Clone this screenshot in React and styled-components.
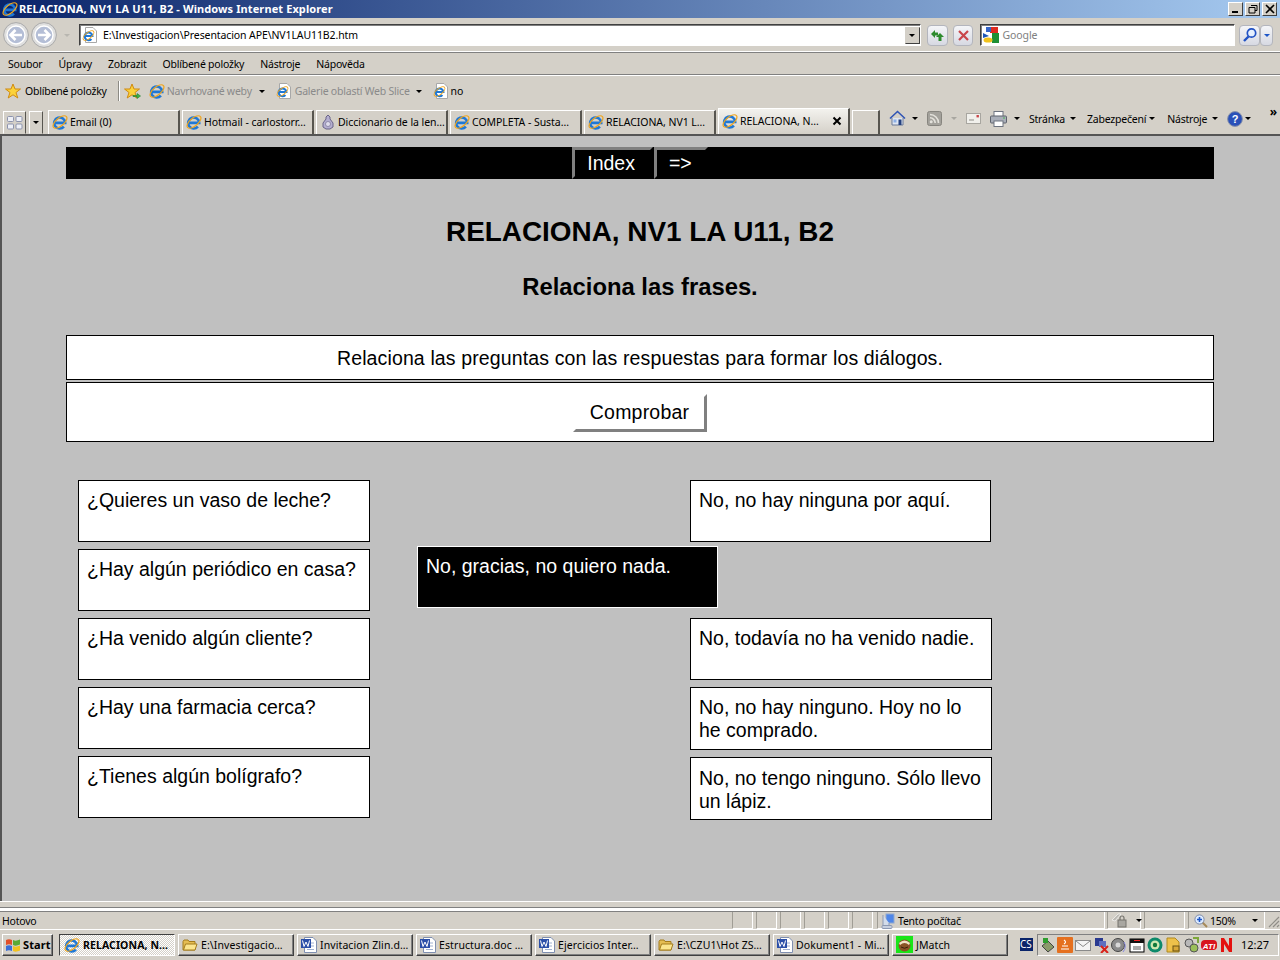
import React from "react";
import styled, { createGlobalStyle } from "styled-components";

const Global = createGlobalStyle`
  html, body { margin: 0; padding: 0; width: 1280px; height: 960px; overflow: hidden; background: #d4d0c8; }
  * { box-sizing: border-box; }
`;

const UI_FONT = `"Noto Sans", "DejaVu Sans", sans-serif`;
const PAGE_FONT = `"Liberation Sans", Arial, sans-serif`;

const Window = styled.div`
  width: 1280px;
  height: 960px;
  display: flex;
  flex-direction: column;
  font-family: ${UI_FONT};
  font-size: 10.5px;
  letter-spacing: -0.22px;
  color: #000;
  background: #d4d0c8;
`;

const TitleBar = styled.div`
  height: 18px;
  flex: none;
  display: flex;
  align-items: center;
  padding: 0 3px 0 2px;
  background: linear-gradient(to right, #0a246a, #a6caf0);
  color: #fff;
  font-weight: 700;
  font-size: 11px;
  letter-spacing: 0.1px;
`;
const TitleText = styled.span`
  margin: 0 0 2px 1px;
  flex: 1;
`;
const WinButtons = styled.div`
  display: flex;
  gap: 2px;
`;
const WinButton = styled.div`
  width: 15px;
  height: 14px;
  background: #d4d0c8;
  border: 1px solid;
  border-color: #fff #404040 #404040 #fff;
  display: flex;
  align-items: center;
  justify-content: center;
`;

const AddressBar = styled.div`
  height: 35px;
  flex: none;
  display: flex;
  align-items: center;
  padding: 0 7px 0 3px;
  border-bottom: 1px solid #808080;
  box-shadow: inset 0 -2px 0 -1px #fff;
`;
const Field = styled.div`
  height: 22px;
  width: ${(p) => p.$w}px;
  margin-left: ${(p) => p.$ml || 0}px;
  background: #fff;
  border: 1px solid;
  border-color: #404040 #fff #fff #404040;
  box-shadow: inset 1px 1px 0 #808080;
  display: flex;
  align-items: center;
  padding-left: 2px;
`;
const FieldText = styled.span`
  margin-left: ${(p) => p.$ml || 5}px;
  flex: 1;
  color: ${(p) => p.$color || "#000"};
  letter-spacing: -0.1px;
`;
const ComboArrow = styled.div`
  width: 15px;
  height: 17px;
  background: #d4d0c8;
  border: 1px solid;
  border-color: #d4d0c8 #404040 #404040 #d4d0c8;
  display: flex;
  align-items: center;
  justify-content: center;
`;
const GlassButton = styled.div`
  width: ${(p) => p.$w || 21}px;
  height: 21px;
  margin-left: ${(p) => p.$ml || 0}px;
  border: 1px solid #b3b5bd;
  border-radius: 4px;
  background: linear-gradient(#f4f5f8, #d7d9e2);
  display: flex;
  align-items: center;
  justify-content: center;
`;
const BackForward = styled.div`
  display: flex;
  align-items: center;
  gap: 2px;
  margin-right: 9px;
`;

const MenuBar = styled.div`
  height: 22px;
  flex: none;
  display: flex;
  align-items: center;
  padding-left: 8px;
  gap: 16px;
  border-bottom: 1px solid #808080;
  box-shadow: 0 1px 0 #fff;
`;

const FavBar = styled.div`
  height: 32px;
  flex: none;
  display: flex;
  align-items: center;
  padding-left: 5px;
`;
const FavItem = styled.span`
  display: inline-flex;
  align-items: center;
  gap: ${(p) => p.$gap || 0}px;
  margin-left: ${(p) => p.$ml || 0}px;
  color: ${(p) => (p.$muted ? "#8a8a8a" : "#000")};
  white-space: nowrap;
`;
const FavSep = styled.div`
  width: 1px;
  height: 20px;
  margin-left: 11px;
  background: #8c8a84;
  box-shadow: 1px 0 0 #fff;
`;
const Caret = styled.span`
  display: inline-block;
  flex: none;
  width: 0;
  height: 0;
  margin-left: ${(p) => p.$ml ?? 5}px;
  border-left: 3px solid transparent;
  border-right: 3px solid transparent;
  border-top: 3px solid ${(p) => p.$color || "#000"};
`;

const TabRow = styled.div`
  height: 27px;
  flex: none;
  display: flex;
  align-items: flex-end;
  padding-left: 3px;
  position: relative;
`;
const QuickTab = styled.div`
  width: ${(p) => p.$w}px;
  height: 23px;
  margin-left: ${(p) => p.$ml || 0}px;
  border: 1px solid;
  border-color: #fff #57554f transparent #fff;
  display: flex;
  align-items: center;
  justify-content: center;
`;
const Tab = styled.div`
  width: 132px;
  height: ${(p) => (p.$active ? 26 : 24)}px;
  margin-left: ${(p) => p.$ml ?? 2}px;
  display: flex;
  align-items: center;
  padding: 0 4px 2px 3px;
  gap: 2px;
  border-top: 1px solid #fff;
  border-left: 1px solid #fff;
  border-right: 2px solid #57554f;
  background: ${(p) => (p.$active ? "linear-gradient(#f3f2ee, #d4d0c8)" : "transparent")};
  white-space: nowrap;
`;
const TabText = styled.span`
  flex: 1;
  letter-spacing: -0.05px;
`;
const NewTab = styled.div`
  width: 28px;
  height: 24px;
  margin-left: 2px;
  border-top: 1px solid #fff;
  border-left: 1px solid #fff;
  border-right: 2px solid #57554f;
`;
const CommandBar = styled.div`
  display: flex;
  align-items: center;
  height: 24px;
  margin-left: 9px;
  padding-bottom: 7px;
`;
const CmdIcon = styled.span`
  display: inline-flex;
  margin-left: ${(p) => p.$ml || 0}px;
`;
const CmdLabel = styled.span`
  margin-left: ${(p) => p.$ml || 0}px;
  white-space: nowrap;
`;
const Chevrons = styled.span`
  position: absolute;
  right: 3px;
  top: -4px;
  font-size: 12px;
  font-weight: 700;
`;

const Content = styled.main`
  height: 767px;
  flex: none;
  background: #c0c0c0;
  border-top: 2px solid #555;
  border-left: 2px solid #555;
  padding: 11px 66px 0 64px;
  font-family: ${PAGE_FONT};
  font-size: 19.5px;
  letter-spacing: 0;
`;
const NavBar = styled.nav`
  height: 32px;
  background: #000;
  display: flex;
  justify-content: center;
  gap: 1px;
`;
const NavButton = styled.div`
  height: 32px;
  color: #fff;
  padding: 0 ${(p) => p.$pr}px 0 ${(p) => p.$pl}px;
  border: 3px solid;
  border-color: #808080 #000 #000 #808080;
  line-height: 26px;
  white-space: nowrap;
`;
const Heading = styled.h1`
  margin: 37px 0 0;
  text-align: center;
  font-size: 27.9px;
  line-height: 32px;
  font-weight: 700;
`;
const SubHeading = styled.h2`
  margin: 25px 0 0;
  text-align: center;
  font-size: 23.8px;
  line-height: 28px;
  font-weight: 700;
`;
const Instruction = styled.div`
  margin-top: 34px;
  height: 45px;
  background: #fff;
  border: 1px solid #000;
  text-align: center;
  line-height: 44px;
  letter-spacing: 0.13px;
`;
const ButtonRow = styled.div`
  margin-top: 2px;
  height: 60px;
  background: #fff;
  border: 1px solid #000;
  display: flex;
  justify-content: center;
  padding-top: 11px;
`;
const CheckButton = styled.div`
  height: 38px;
  padding: 0 15px 0 14px;
  border: 3px solid;
  border-color: #fff #808080 #808080 #fff;
  line-height: 30px;
  letter-spacing: 0.2px;
`;
const Board = styled.div`
  position: relative;
  margin-top: 38px;
  display: flex;
  padding-left: 12px;
`;
const Column = styled.div`
  display: flex;
  flex-direction: column;
  align-items: flex-start;
  gap: 7px;
  margin-left: ${(p) => p.$ml || 0}px;
`;
const Card = styled.div`
  width: ${(p) => p.$w}px;
  height: ${(p) => p.$h || 62}px;
  margin-top: ${(p) => p.$mt || 0}px;
  padding: ${(p) => p.$pt || 8}px 8px 0;
  background: #fff;
  border: 1px solid #000;
  line-height: 23px;
`;
const DraggedCard = styled(Card)`
  position: absolute;
  left: 351px;
  top: 66px;
  background: #000;
  border-color: #fff;
  color: #fff;
`;

const StatusBar = styled.footer`
  height: 29px;
  flex: none;
  display: flex;
  align-items: flex-end;
  border-top: 1px solid #fff;
  border-bottom: 1px solid #fff;
  position: relative;
  &::before {
    content: "";
    position: absolute;
    left: 0;
    right: 0;
    top: 5px;
    height: 3px;
    border-top: 1px solid #808080;
    border-bottom: 1px solid #808080;
    background: #fff;
  }
`;
const StatusText = styled.span`
  width: 731px;
  height: 18px;
  line-height: 20px;
  padding-left: 2px;
  flex: none;
`;
const Cell = styled.div`
  width: ${(p) => p.$w}px;
  height: 18px;
  margin-left: ${(p) => p.$ml ?? 3}px;
  border: 1px solid;
  border-color: #a09d95 #fff #fff #a09d95;
  display: flex;
  align-items: center;
  padding: 1px 0 0 ${(p) => p.$pl || 0}px;
  gap: ${(p) => p.$gap ?? 4}px;
  white-space: nowrap;
  flex: none;
`;
const Grip = styled.svg`
  position: absolute;
  right: 0;
  bottom: 1px;
`;

const TaskBar = styled.div`
  height: 30px;
  flex: none;
  display: flex;
  align-items: center;
  padding: 3px 2px 4px;
  letter-spacing: 0.1px;
`;
const TaskButton = styled.div`
  width: ${(p) => p.$w || 116}px;
  height: 22px;
  margin-left: ${(p) => p.$ml ?? 3}px;
  border: 1px solid;
  border-color: ${(p) => (p.$active ? "#404040 #fff #fff #404040" : "#fff #404040 #404040 #fff")};
  box-shadow: ${(p) => (p.$active ? "none" : "inset -1px -1px 0 #808080")};
  background: ${(p) => (p.$active ? "repeating-conic-gradient(#fff 0 25%, #d4d0c8 0 50%) 0 0 / 2px 2px" : "#d4d0c8")};
  display: flex;
  align-items: center;
  padding-left: ${(p) => p.$pl ?? 3}px;
  gap: ${(p) => p.$gap ?? 3}px;
  font-size: ${(p) => p.$fs || 10.5}px;
  font-weight: ${(p) => (p.$bold ? 700 : 400)};
  white-space: nowrap;
  flex: none;
`;
const CsBox = styled.div`
  width: 13px;
  height: 13px;
  margin-left: 12px;
  background: #0a246a;
  color: #fff;
  font-size: 10px;
  line-height: 13px;
  letter-spacing: 0;
  overflow: hidden;
  flex: none;
`;
const Tray = styled.div`
  width: 242px;
  height: 22px;
  margin-left: 4px;
  border: 1px solid;
  border-color: #808080 #fff #fff #808080;
  display: flex;
  align-items: center;
  padding-left: 1px;
  flex: none;
`;
const TrayIcons = styled.div`
  display: flex;
  gap: 2px;
  flex: none;
`;
const Clock = styled.span`
  margin-left: 8px;
  font-size: 11px;
  letter-spacing: 0;
`;

const IE = ({ size = 16 }) => (
  <svg width={size} height={size} viewBox="0 0 16 16" style={{ flex: "none" }}>
    <path d="M2.6 8.9H13.2A5.5 5.5 0 1 0 11.9 12.6" fill="none" stroke="#1f78d6" strokeWidth="2.6" />
    <ellipse cx="8" cy="8" rx="8.4" ry="4" transform="rotate(-40 8 8)" fill="none" stroke="#efa51f" strokeWidth="1.2" />
  </svg>
);
const PageIE = () => (
  <svg width="16" height="16" viewBox="0 0 16 16" style={{ flex: "none" }}>
    <path d="M3.5.5H11L14.5 4V15.5H3.5Z" fill="#fff" stroke="#a8a8a8" />
    <path d="M2.5 9H10.4A3.9 3.9 0 1 0 9.4 12" fill="none" stroke="#1f78d6" strokeWidth="2.1" />
    <ellipse cx="6.5" cy="8.5" rx="6.6" ry="3" transform="rotate(-40 6.5 8.5)" fill="none" stroke="#efa51f" strokeWidth="1" />
  </svg>
);
const Folder = () => (
  <svg width="16" height="16" viewBox="0 0 16 16" style={{ flex: "none" }}>
    <path d="M1 4.5L2 3H6L7 4.5H13V13H1Z" fill="#e5bd52" stroke="#a47c1c" />
    <path d="M1.5 13L3.5 7H15L13 13Z" fill="#fbe58e" stroke="#a47c1c" />
  </svg>
);
const WordDoc = () => (
  <svg width="16" height="16" viewBox="0 0 16 16" style={{ flex: "none" }}>
    <path d="M3.5.5H12L15.5 4V15.5H3.5Z" fill="#fff" stroke="#7f8fb0" />
    <path d="M6 12.5H13M10 9H13M10 6H13" stroke="#9fb0d0" />
    <rect x="0" y="2" width="10" height="9" fill="#2b4fa8" />
    <path d="M1.5 3.5L3 9.5L5 5L7 9.5L8.5 3.5" fill="none" stroke="#fff" />
  </svg>
);
const Star = ({ plus }) => (
  <svg width="17" height="17" viewBox="0 0 17 17" style={{ flex: "none" }}>
    <path d="M8 1L10 6H15.5L11 9.5L12.8 15L8 11.8L3.2 15L5 9.5L.5 6H6Z" fill="#fbd23a" stroke="#d08a10" />
    {plus && <path d="M9 12.5H13V10.5L16.5 13L13 15.5V13.5H9Z" fill="#3fb54a" stroke="#1f7a2a" strokeWidth=".6" />}
  </svg>
);
const NavArrow = ({ dir }) => (
  <svg width="26" height="26" viewBox="0 0 26 26" style={{ flex: "none" }}>
    <circle cx="13" cy="13" r="12.4" fill="#dfdfdf" stroke="#a9a9a9" />
    <circle cx="13" cy="13" r="9" fill="#b4bed6" stroke="#fff" strokeWidth="1.4" />
    <path
      d={dir === "l" ? "M19 13H9M12.5 8L7.5 13L12.5 18" : "M7 13H17M13.5 8L18.5 13L13.5 18"}
      fill="none"
      stroke="#fff"
      strokeWidth="2.6"
    />
  </svg>
);
const Refresh = () => (
  <svg width="15" height="15" viewBox="0 0 15 15">
    <path d="M1 6L5 2V4.5H8V7.5H5V10Z" fill="#2e8b2e" />
    <path d="M10 14L6 10H8.5V6H11.5V10H14Z" fill="#2e8b2e" transform="rotate(180 10 9.5)" />
  </svg>
);
const Stop = () => (
  <svg width="13" height="13" viewBox="0 0 13 13">
    <path d="M2 2L11 11M11 2L2 11" stroke="#c9464a" strokeWidth="2.2" />
  </svg>
);
const Magnifier = () => (
  <svg width="16" height="16" viewBox="0 0 16 16">
    <circle cx="9.5" cy="6" r="4.2" fill="#e6f0ff" stroke="#2152c4" strokeWidth="1.7" />
    <path d="M6.5 9.5L2 14" stroke="#2152c4" strokeWidth="2.4" />
  </svg>
);
const GoogleIcon = () => (
  <svg width="16" height="16" viewBox="0 0 16 16" style={{ flex: "none" }}>
    <rect x="7" y="0" width="8" height="6" fill="#dd2a20" />
    <rect x="9" y="6" width="7" height="10" fill="#1e8f34" />
    <rect x="3" y="0" width="5" height="5" fill="#3464c8" />
    <path d="M0 6L6 9L0 11Z" fill="#1d56b8" />
    <ellipse cx="5" cy="13" rx="4.5" ry="2.6" fill="#f1c21b" />
  </svg>
);
const Home = () => (
  <svg width="17" height="17" viewBox="0 0 17 17" style={{ flex: "none" }}>
    <path d="M3 8V15H14V8" fill="#dfe6f2" stroke="#6b7a99" />
    <path d="M1 8.5L8.5 1.5L16 8.5" fill="none" stroke="#2f54b5" strokeWidth="1.6" />
    <rect x="9.5" y="9.5" width="3" height="5.5" fill="#24407f" />
    <rect x="4.5" y="9.5" width="3" height="3" fill="#8db0e6" />
  </svg>
);
const Rss = () => (
  <svg width="15" height="15" viewBox="0 0 15 15" style={{ flex: "none" }}>
    <rect x=".5" y=".5" width="14" height="14" rx="2" fill="#a3a19b" stroke="#87857f" />
    <circle cx="4.2" cy="10.8" r="1.5" fill="#e4e2dc" />
    <path d="M3 6.8A5.2 5.2 0 0 1 8.2 12M3 3.5A8.5 8.5 0 0 1 11.5 12" fill="none" stroke="#e4e2dc" strokeWidth="1.6" />
  </svg>
);
const ReadMail = () => (
  <svg width="15" height="11" viewBox="0 0 15 11" style={{ flex: "none" }}>
    <rect x=".5" y=".5" width="14" height="10" fill="#f1f0ec" stroke="#a8a6a0" />
    <rect x="10.5" y="2" width="2.4" height="2.4" fill="#c9464a" />
    <path d="M3 7H8" stroke="#8f8d87" />
  </svg>
);
const Printer = () => (
  <svg width="17" height="16" viewBox="0 0 17 16" style={{ flex: "none" }}>
    <rect x="4" y=".5" width="9" height="5" fill="#fff" stroke="#6e7480" />
    <rect x=".5" y="5" width="16" height="7" rx="1" fill="#a9aeb8" stroke="#5e636d" />
    <rect x="4" y="10" width="9" height="5.5" fill="#fff" stroke="#6e7480" />
    <circle cx="14" cy="7" r=".8" fill="#3fb54a" />
  </svg>
);
const Help = () => (
  <svg width="16" height="16" viewBox="0 0 16 16" style={{ flex: "none" }}>
    <circle cx="8" cy="8" r="7.4" fill="#2a50b8" stroke="#8a93ab" />
    <text x="8" y="12" textAnchor="middle" fontSize="11" fontWeight="700" fill="#fff" fontFamily={PAGE_FONT}>?</text>
  </svg>
);
const Computer = () => (
  <svg width="14" height="16" viewBox="0 0 14 16" style={{ flex: "none" }}>
    <rect x="5" y="1" width="8" height="9" fill="#4f86e8" stroke="#8fa8cf" />
    <path d="M2 2V13H8V10" fill="#d3dcea" stroke="#8c99b3" />
    <rect x="1" y="12.5" width="10" height="3" rx="1" fill="#c7cfde" stroke="#8c99b3" />
  </svg>
);
const Lock = () => (
  <svg width="17" height="15" viewBox="0 0 17 15" style={{ flex: "none" }}>
    <path d="M1 7L7 1H10L4 8Z" fill="#bcbab4" stroke="#fff" strokeWidth=".6" />
    <rect x="7" y="7" width="8" height="7" fill="#a9a7a1" stroke="#74726c" />
    <path d="M9 7V5A2 2 0 0 1 13 5V7" fill="none" stroke="#74726c" strokeWidth="1.2" />
  </svg>
);
const ZoomIcon = () => (
  <svg width="14" height="14" viewBox="0 0 14 14" style={{ flex: "none" }}>
    <path d="M8 8L13 13" stroke="#a68a58" strokeWidth="2" />
    <circle cx="5.5" cy="5.5" r="4.6" fill="#dcebff" stroke="#7d8aa8" />
    <path d="M3 5.5H8M5.5 3V8" stroke="#1d56c8" strokeWidth="1.6" />
  </svg>
);
const WinFlag = () => (
  <svg width="16" height="16" viewBox="0 0 16 16" style={{ flex: "none" }}>
    <path d="M1 3Q4 1.5 7 3V8Q4 6.5 1 8Z" fill="#e2502a" />
    <path d="M8 3Q11 4.5 15 2.5V7.5Q11 9.5 8 8Z" fill="#5aaa34" />
    <path d="M1 9Q4 7.5 7 9V14Q4 12.5 1 14Z" fill="#3a6fd8" />
    <path d="M8 9Q11 10.5 15 8.5V13.5Q11 15.5 8 14Z" fill="#f2c21f" />
  </svg>
);
const Seal = () => (
  <svg width="16" height="16" viewBox="0 0 16 16" style={{ flex: "none" }}>
    <path d="M8 1L10 3V5L13 9V13L10 15H6L3 13V9L6 5V3Z" fill="#b4aed0" stroke="#6a6488" />
    <circle cx="8" cy="10" r="2.5" fill="#dfdcec" stroke="#6a6488" strokeWidth=".6" />
  </svg>
);
const JMatchIcon = () => (
  <svg width="17" height="17" viewBox="0 0 17 17" style={{ flex: "none" }}>
    <rect width="17" height="17" fill="#19e619" />
    <circle cx="8.5" cy="9.5" r="6" fill="#8a5426" />
    <path d="M3 7Q8.5 2 14 7L13 9Q8.5 5 4 9Z" fill="#f2e4c6" />
    <path d="M5 11Q8.5 13.5 12 11" fill="none" stroke="#3a200c" />
  </svg>
);
const TrayIcon = ({ children, w = 16 }) => (
  <svg width={w} height="16" viewBox={`0 0 ${w} 16`} style={{ flex: "none" }}>{children}</svg>
);

const tabs = ["Email (0)", "Hotmail - carlostorr…", "Diccionario de la len…", "COMPLETA - Susta…", "RELACIONA, NV1 L…"];

const taskItems = [
  { icon: <Folder />, label: "E:\\Investigacio…" },
  { icon: <WordDoc />, label: "Invitacion Zlin.d…" },
  { icon: <WordDoc />, label: "Estructura.doc …" },
  { icon: <WordDoc />, label: "Ejercicios Inter…" },
  { icon: <Folder />, label: "E:\\CZU1\\Hot ZS…" },
  { icon: <WordDoc />, label: "Dokument1 - Mi…" },
];

const leftCards = [
  "¿Quieres un vaso de leche?",
  "¿Hay algún periódico en casa?",
  "¿Ha venido algún cliente?",
  "¿Hay una farmacia cerca?",
  "¿Tienes algún bolígrafo?",
];

const rightCards = [
  { text: "No, no hay ninguna por aquí.", w: 301 },
  { text: "No, todavía no ha venido nadie.", w: 302, mt: 69 },
  { text: "No, no hay ninguno. Hoy no lo he comprado.", w: 302, h: 63 },
  { text: "No, no tengo ninguno. Sólo llevo un lápiz.", w: 302, h: 63, pt: 9 },
];

const App = () => (
  <Window>
    <Global />
    <TitleBar>
      <IE />
      <TitleText>RELACIONA, NV1 LA U11, B2 - Windows Internet Explorer</TitleText>
      <WinButtons>
        <WinButton>
          <svg width="10" height="10" viewBox="0 0 10 10"><rect x="1" y="7" width="6" height="2" /></svg>
        </WinButton>
        <WinButton>
          <svg width="10" height="10" viewBox="0 0 10 10">
            <path d="M3 1.5H9V6.5H7M1 3.5H7V9H1Z" fill="none" stroke="#000" />
          </svg>
        </WinButton>
        <WinButton>
          <svg width="10" height="10" viewBox="0 0 10 10">
            <path d="M1 1L9 9M9 1L1 9" stroke="#000" strokeWidth="1.6" />
          </svg>
        </WinButton>
      </WinButtons>
    </TitleBar>

    <AddressBar>
      <BackForward>
        <NavArrow dir="l" />
        <NavArrow dir="r" />
        <Caret $ml={5} $color="#b8b6b0" />
      </BackForward>
      <Field $w={843}>
        <PageIE />
        <FieldText>E:\Investigacion\Presentacion APE\NV1LAU11B2.htm</FieldText>
        <ComboArrow><Caret $ml={0} /></ComboArrow>
      </Field>
      <GlassButton $ml={6}><Refresh /></GlassButton>
      <GlassButton $ml={5}><Stop /></GlassButton>
      <Field $w={255} $ml={7}>
        <GoogleIcon />
        <FieldText $ml={3} $color="#808080">Google</FieldText>
      </Field>
      <GlassButton $ml={4} $w={21}><Magnifier /></GlassButton>
      <GlassButton $w={13}><Caret $ml={0} $color="#1d56c8" /></GlassButton>
    </AddressBar>

    <MenuBar>
      <span>Soubor</span>
      <span>Úpravy</span>
      <span>Zobrazit</span>
      <span>Oblíbené položky</span>
      <span>Nástroje</span>
      <span>Nápověda</span>
    </MenuBar>

    <FavBar>
      <Star />
      <FavItem $ml={3}>Oblíbené položky</FavItem>
      <FavSep />
      <FavItem $ml={5}><Star plus /></FavItem>
      <FavItem $ml={8} $gap={2} $muted><IE />Navrhované weby</FavItem>
      <Caret $ml={7} />
      <FavItem $ml={11} $gap={3} $muted><PageIE />Galerie oblastí Web Slice</FavItem>
      <Caret $ml={6} />
      <FavItem $ml={11} $gap={2}><PageIE />no</FavItem>
    </FavBar>

    <TabRow>
      <QuickTab $w={23}>
        <svg width="16" height="14" viewBox="0 0 16 14">
          <g fill="#eef0f6" stroke="#8c93ad">
            <rect x=".5" y=".5" width="6" height="5" rx="1" />
            <rect x="9" y=".5" width="6" height="5" rx="1" />
            <rect x=".5" y="8" width="6" height="5" rx="1" />
            <rect x="9" y="8" width="6" height="5" rx="1" />
          </g>
        </svg>
      </QuickTab>
      <QuickTab $w={14} $ml={3}><Caret $ml={0} /></QuickTab>
      {tabs.map((t, i) => (
        <Tab key={t} $ml={i === 0 ? 5 : 2}>
          {i === 2 ? <Seal /> : <IE />}
          <TabText>{t}</TabText>
        </Tab>
      ))}
      <Tab $active>
        <IE />
        <TabText>RELACIONA, N…</TabText>
        <svg width="10" height="10" viewBox="0 0 10 10" style={{ flex: "none", marginRight: 2 }}>
          <path d="M1.5 1.5L8.5 8.5M8.5 1.5L1.5 8.5" stroke="#000" strokeWidth="2" />
        </svg>
      </Tab>
      <NewTab />
      <CommandBar>
        <Home />
        <Caret $ml={6} />
        <CmdIcon $ml={9}><Rss /></CmdIcon>
        <Caret $ml={9} $color="#a8a6a0" />
        <CmdIcon $ml={9}><ReadMail /></CmdIcon>
        <CmdIcon $ml={9}><Printer /></CmdIcon>
        <Caret $ml={7} />
        <CmdLabel $ml={9}>Stránka</CmdLabel>
        <Caret />
        <CmdLabel $ml={11}>Zabezpečení</CmdLabel>
        <Caret $ml={3} />
        <CmdLabel $ml={12}>Nástroje</CmdLabel>
        <Caret />
        <CmdIcon $ml={9}><Help /></CmdIcon>
        <Caret $ml={2} />
      </CommandBar>
      <Chevrons>»</Chevrons>
    </TabRow>

    <Content>
      <NavBar>
        <NavButton $pl={12} $pr={15}>Index</NavButton>
        <NavButton $pl={12} $pr={13}>=&gt;</NavButton>
      </NavBar>
      <Heading>RELACIONA, NV1 LA U11, B2</Heading>
      <SubHeading>Relaciona las frases.</SubHeading>
      <Instruction>Relaciona las preguntas con las respuestas para formar los diálogos.</Instruction>
      <ButtonRow>
        <CheckButton>Comprobar</CheckButton>
      </ButtonRow>
      <Board>
        <Column>
          {leftCards.map((t) => <Card key={t} $w={292}>{t}</Card>)}
        </Column>
        <Column $ml={320}>
          {rightCards.map((c) => <Card key={c.text} $w={c.w} $h={c.h} $mt={c.mt} $pt={c.pt}>{c.text}</Card>)}
        </Column>
        <DraggedCard $w={301}>No, gracias, no quiero nada.</DraggedCard>
      </Board>
    </Content>

    <StatusBar>
      <StatusText>Hotovo</StatusText>
      <Cell $w={21} $ml={1} />
      <Cell $w={21} />
      <Cell $w={21} />
      <Cell $w={21} />
      <Cell $w={21} />
      <Cell $w={21} />
      <Cell $w={228} $ml={4} $pl={3} $gap={3}><Computer />Tento počítač</Cell>
      <Cell $w={34} $ml={2} $pl={3}><Lock /><Caret $ml={4} /></Cell>
      <Cell $w={41} />
      <Cell $w={77} $pl={5} $gap={2}>
        <ZoomIcon />150%<Caret $ml={14} />
      </Cell>
      <Grip width="14" height="14" viewBox="0 0 14 14">
        <path d="M13 3L3 13M13 7L7 13M13 11L11 13" stroke="#908e88" strokeWidth="1.2" />
      </Grip>
    </StatusBar>

    <TaskBar>
      <TaskButton $w={51} $ml={0} $bold $pl={2} $gap={2} $fs={11}><WinFlag />Start</TaskButton>
      <TaskButton $ml={6} $active $bold $pl={4}><IE />RELACIONA, N…</TaskButton>
      {taskItems.map((t) => (
        <TaskButton key={t.label}>{t.icon}{t.label}</TaskButton>
      ))}
      <TaskButton><JMatchIcon />JMatch</TaskButton>
      <CsBox>CS</CsBox>
      <Tray>
        <TrayIcons>
          <TrayIcon><path d="M3 9L9 4L15 10L9 15Z" fill="#8a9a6a" stroke="#444" /><path d="M4 1H9V6H4Z" fill="#2e9e2e" /></TrayIcon>
          <TrayIcon><rect width="16" height="16" rx="1" fill="#e5701f" /><path d="M4 12H12M5 9H11M7 3Q10 5 7 7" fill="none" stroke="#fff" strokeWidth="1.2" /></TrayIcon>
          <TrayIcon><rect x=".5" y="3.5" width="15" height="10" fill="#f4f4f4" stroke="#8a8a8a" /><path d="M1 4L8 9.5L15 4" fill="none" stroke="#8a8a8a" /></TrayIcon>
          <TrayIcon><rect x="2" y="1" width="8" height="8" fill="#2a3a90" /><rect x="6" y="4" width="7" height="6" fill="#5f6fc0" /><path d="M8 9L15 16M15 9L8 16" stroke="#d8221a" strokeWidth="2" /></TrayIcon>
          <TrayIcon><circle cx="7" cy="8" r="6.5" fill="#8b8b8b" stroke="#444" /><circle cx="7" cy="8" r="2.5" fill="#d8d8d8" /><path d="M13 5Q16 10 12 15" fill="none" stroke="#8a8ae0" /></TrayIcon>
          <TrayIcon><rect x="1" y="2" width="14" height="13" fill="#fff" stroke="#000" /><rect x="1" y="2" width="14" height="4" fill="#111" /><path d="M5 3.5H11" stroke="#e22" /><rect x="4" y="9" width="8" height="4" fill="#aaa" /></TrayIcon>
          <TrayIcon><circle cx="8" cy="8" r="7.5" fill="#0d8a6a" /><circle cx="8" cy="8" r="4.5" fill="#cfe8b0" /><circle cx="8" cy="8" r="2.2" fill="#127a3a" /></TrayIcon>
          <TrayIcon><path d="M2 1H10L14 5V15H2Z" fill="#eec14a" stroke="#b08a20" /><rect x="8" y="9" width="6" height="5" fill="#d8a838" stroke="#6a5212" /></TrayIcon>
          <TrayIcon><circle cx="6" cy="6" r="4" fill="#b8b8b8" stroke="#555" /><circle cx="11" cy="11" r="4" fill="#9abf58" stroke="#555" /><path d="M10 1H15V6" fill="none" stroke="#7ea83a" strokeWidth="2" /></TrayIcon>
          <TrayIcon><rect y="3" width="16" height="10" rx="4" fill="#d8141c" /><text x="8" y="11.5" textAnchor="middle" fontSize="8" fontWeight="700" fontStyle="italic" fill="#fff" fontFamily={PAGE_FONT}>ATI</text></TrayIcon>
          <TrayIcon w={14}><path d="M2 15V1H5L10 9V1H13V15H10L5 7V15Z" fill="#e4120f" /></TrayIcon>
        </TrayIcons>
        <Clock>12:27</Clock>
      </Tray>
    </TaskBar>
  </Window>
);

export default App;
